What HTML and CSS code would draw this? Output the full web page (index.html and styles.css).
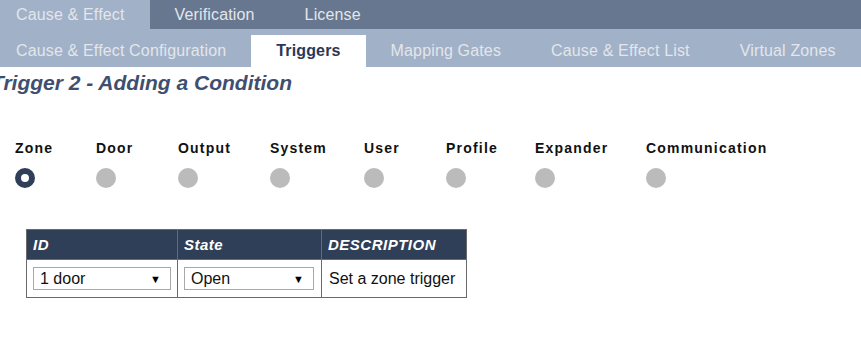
FILE: index.html
```html
<!DOCTYPE html>
<html lang="en">
<head>
  <meta charset="UTF-8">
  <title>Triggers</title>
  <link rel="stylesheet" href="styles.css">
</head>
<body>
  <div class="page">
    <div class="tabs-main">
      <a class="tab active">Cause &amp; Effect</a>
      <a class="tab">Verification</a>
      <a class="tab">License</a>
    </div>
    <div class="tabs-sub">
      <a class="tab">Cause &amp; Effect Configuration</a>
      <a class="tab active">Triggers</a>
      <a class="tab">Mapping Gates</a>
      <a class="tab">Cause &amp; Effect List</a>
      <a class="tab">Virtual Zones</a>
    </div>

    <h2 class="title">Trigger 2 - Adding a Condition</h2>

    <div class="types">
      <div class="type w-zone"><span>Zone</span><i class="dot checked"></i></div>
      <div class="type w-door"><span>Door</span><i class="dot"></i></div>
      <div class="type w-output"><span>Output</span><i class="dot"></i></div>
      <div class="type w-system"><span>System</span><i class="dot"></i></div>
      <div class="type w-user"><span>User</span><i class="dot"></i></div>
      <div class="type w-profile"><span>Profile</span><i class="dot"></i></div>
      <div class="type w-expander"><span>Expander</span><i class="dot"></i></div>
      <div class="type"><span>Communication</span><i class="dot"></i></div>
    </div>

    <table class="grid">
      <tr>
        <th class="c-id">ID</th>
        <th class="c-state">State</th>
        <th class="c-desc">DESCRIPTION</th>
      </tr>
      <tr>
        <td><div class="select s-id"><span>1 door</span><span class="arrow">&#9660;</span></div></td>
        <td><div class="select s-state"><span>Open</span><span class="arrow">&#9660;</span></div></td>
        <td class="desc">Set a zone trigger</td>
      </tr>
    </table>
  </div>
</body>
</html>
```

FILE: styles.css
```css
body {
  margin: 0;
  font-family: "Liberation Sans", Arial, sans-serif;
  background: #fff;
  overflow: hidden;
}
.page {
  margin-left: -9px;
}

/* Tabs */
.tabs-main {
  display: flex;
  background: #67778f;
  height: 29px;
}
.tabs-sub {
  display: flex;
  background: #a1b1c8;
  height: 38px;
  padding-top: 6px;
  box-sizing: border-box;
}
.tab {
  padding: 0 25px;
  font-size: 16px;
  letter-spacing: 0.15px;
  color: #e3e6eb;
  white-space: nowrap;
}
.tabs-main .tab {
  line-height: 29px;
}
.tabs-main .tab.active {
  background: #a1b1c8;
}
.tabs-sub .tab {
  height: 32px;
  line-height: 32px;
}
.tabs-sub .tab.active {
  background: #fff;
  color: #2b3855;
  font-weight: bold;
}

.title {
  margin: 4px 0 0;
  font-size: 21px;
  line-height: 24px;
  font-style: italic;
  font-weight: bold;
  color: #404f70;
}

/* Condition types */
.types {
  display: flex;
  margin: 45px 0 0 24px;
}
.type {
  display: flex;
  flex-direction: column;
  align-items: flex-start;
  gap: 12px;
}
.type span {
  font-size: 14px;
  line-height: 16px;
  font-weight: bold;
  letter-spacing: 1.2px;
  color: #111;
}
.w-zone { width: 81px; }
.w-door { width: 82px; }
.w-output { width: 92px; }
.w-system { width: 94px; }
.w-user { width: 82px; }
.w-profile { width: 89px; }
.w-expander { width: 111px; }
.dot {
  display: block;
  width: 20px;
  height: 20px;
  border-radius: 50%;
  background: #bbbbbb;
  box-sizing: border-box;
}
.dot.checked {
  background: #fff;
  border: 6px solid #2f3f5a;
}

/* Table */
.grid {
  margin: 41px 0 0 35px;
  border-collapse: collapse;
  border: 1px solid #6a6a6a;
}
.grid th {
  background: #2f3f57;
  color: #fff;
  font-size: 15px;
  font-style: italic;
  font-weight: bold;
  letter-spacing: 0.5px;
  text-align: left;
  height: 29px;
  padding: 0 6px;
  border-left: 1px solid #6a6a6a;
}
.grid td {
  font-size: 16px;
  color: #111;
  height: 37px;
  padding: 0 6px;
  border-left: 1px solid #6a6a6a;
  border-top: 1px solid #6a6a6a;
}
.grid td.desc {
  padding-left: 7px;
}
.c-id { width: 138px; }
.c-state { width: 131px; }
.c-desc { width: 132px; }
.select {
  display: flex;
  justify-content: space-between;
  align-items: center;
  height: 23px;
  padding: 0 9px 0 6px;
  border: 1px solid #a9a9a9;
  box-sizing: border-box;
}
.s-id { width: 138px; }
.s-state { width: 130px; }
.arrow {
  font-size: 11px;
  color: #000;
}
```
